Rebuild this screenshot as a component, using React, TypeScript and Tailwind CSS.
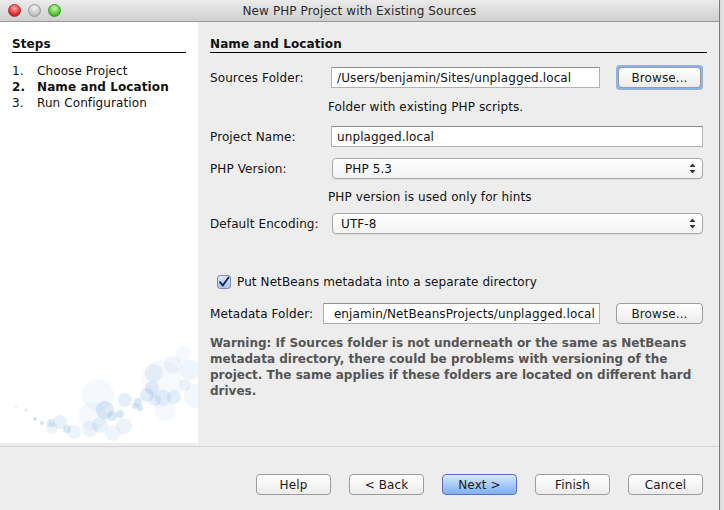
import React from "react";

const bubbles: [number, number, number, number][] = [
  [16, 67, 1, 0.25], [26, 70, 1.5, 0.3], [35, 79, 2, 0.35], [42, 83, 2, 0.35],
  [51, 83, 4, 0.28], [60, 82, 7, 0.18], [52, 88, 6, 0.12], [67, 89, 4, 0.28],
  [74, 92, 7, 0.15], [90, 89, 8, 0.15], [100, 85, 8, 0.15], [93, 76, 14, 0.08],
  [98, 55, 16, 0.08], [105, 70, 9, 0.25], [113, 93, 8, 0.12], [124, 86, 8, 0.15],
  [112, 76, 5, 0.28], [120, 74, 4, 0.3], [125, 60, 7, 0.2], [138, 62, 4, 0.3],
  [135, 66, 3, 0.3], [140, 68, 3, 0.3], [147, 55, 7, 0.22], [152, 48, 7, 0.22],
  [155, 60, 6, 0.2], [165, 70, 11, 0.08], [163, 58, 8, 0.18], [174, 57, 7, 0.2],
  [162, 40, 20, 0.07], [154, 33, 9, 0.16], [173, 25, 9, 0.12], [190, 30, 10, 0.14],
  [196, 56, 12, 0.1], [185, 45, 6, 0.16], [183, 14, 8, 0.08],
];

function Bubbles() {
  return (
    <svg className="absolute bottom-0 left-0" width="198" height="103" viewBox="0 0 198 103">
      {bubbles.map(([x, y, r, o], i) => (
        <circle key={i} cx={x} cy={y} r={r} fill="#7eaee0" fillOpacity={o} />
      ))}
    </svg>
  );
}

function Button({ label, primary, focused, className = "" }: { label: string; primary?: boolean; focused?: boolean; className?: string }) {
  const base = primary
    ? "bg-gradient-to-b from-[#d9e8fc] via-[#a9cbf7] to-[#7fb0f2] border-[#5e6fc2]"
    : "bg-gradient-to-b from-white to-[#ececec] border-[#9d9d9d]";
  return (
    <div className={"rounded-[4px] " + (focused ? "p-[2px] -m-[2px] bg-[#8fb2e6]" : "") + " " + className}>
      <div className={"h-[21px] w-full rounded-[4px] border flex items-center justify-center text-[#1a1a1a] " + base}>
        {label}
      </div>
    </div>
  );
}

function Arrows() {
  return (
    <svg width="7" height="11" viewBox="0 0 7 11" className="mr-[6px]">
      <path d="M3.5 0.5 L6.5 4 L0.5 4 Z" fill="#333" />
      <path d="M3.5 10.5 L6.5 7 L0.5 7 Z" fill="#333" />
    </svg>
  );
}

function Select({ value, pl }: { value: string; pl: string }) {
  return (
    <div className={"ml-[1px] flex-1 h-[21px] rounded-[4px] border border-[#a7a7a7] bg-gradient-to-b from-white to-[#f3f3f3] flex items-center justify-between shadow-[0_1px_0_rgba(0,0,0,0.05)] " + pl}>
      <span>{value}</span>
      <Arrows />
    </div>
  );
}

function Input({ value, className = "" }: { value: string; className?: string }) {
  return (
    <div className={"h-[21px] bg-white border border-[#b2b2b2] border-t-[#8e8e8e] flex items-center pl-[5px] overflow-hidden whitespace-nowrap " + className}>
      {value}
    </div>
  );
}

export default function App() {
  return (
    <div className="w-[724px] h-[510px] flex overflow-hidden text-[12px] tracking-[0.1px] text-[#111] font-['DejaVu_Sans',Verdana,sans-serif] bg-[#ededed]">
      <div className="w-[720px] flex flex-col border-r border-[#7a7a7a]">
        <div className="h-[22px] flex items-center relative bg-gradient-to-b from-[#ebebeb] to-[#cfcfcf] border-b border-[#9a9a9a]">
          <div className="flex items-center gap-[7px] pl-[8px]">
            <span className="w-[13px] h-[13px] rounded-full bg-[radial-gradient(circle_at_50%_30%,#ffb0b0,#e0303a_60%,#a0101a)] border border-[#b03030]" />
            <span className="w-[13px] h-[13px] rounded-full bg-[radial-gradient(circle_at_50%_30%,#f4f4f4,#c8c8c8_60%,#a0a0a0)] border border-[#999]" />
            <span className="w-[13px] h-[13px] rounded-full bg-[radial-gradient(circle_at_50%_30%,#c8f5a8,#5cc838_60%,#2a8a14)] border border-[#3a9a2a]" />
          </div>
          <div className="absolute inset-0 flex items-center justify-center text-[#2b2b2b]">New PHP Project with Existing Sources</div>
        </div>

        <div className="flex h-[421px]">
          <div className="w-[198px] bg-white relative pl-[12px] pr-[12px] pt-[14px]">
            <div className="font-bold leading-[16px] h-[17px] border-b border-black">Steps</div>
            <div className="mt-[10px] leading-[16px]">
              <div className="flex"><span className="w-[25px]">1.</span>Choose Project</div>
              <div className="flex font-bold"><span className="w-[25px]">2.</span>Name and Location</div>
              <div className="flex"><span className="w-[25px]">3.</span>Run Configuration</div>
            </div>
            <Bubbles />
          </div>

          <div className="flex-1 pl-[12px] pr-[12px] pt-[14px]">
            <div className="font-bold leading-[16px] h-[17px] border-b border-black">Name and Location</div>

            <div className="pr-[4px]">
              <div className="flex items-center mt-[14px]">
                <span className="w-[121px]">Sources Folder:</span>
                <Input value="/Users/benjamin/Sites/unplagged.local" className="w-[269px]" />
                <Button label="Browse..." focused className="ml-[16px] w-[87px]" />
              </div>

              <div className="mt-[11px] leading-[16px] pl-[118px]">Folder with existing PHP scripts.</div>

              <div className="flex items-center mt-[11px]">
                <span className="w-[121px]">Project Name:</span>
                <Input value="unplagged.local" className="flex-1" />
              </div>

              <div className="flex items-center mt-[11px]">
                <span className="w-[121px]">PHP Version:</span>
                <Select value="PHP 5.3" pl="pl-[12px]" />
              </div>

              <div className="mt-[10px] leading-[16px] pl-[118px]">PHP version is used only for hints</div>

              <div className="flex items-center mt-[8px]">
                <span className="w-[121px]">Default Encoding:</span>
                <Select value="UTF-8" pl="pl-[8px]" />
              </div>

              <div className="flex items-center mt-[40px] h-[16px] pl-[7px]">
                <span className="w-[14px] h-[14px] rounded-[3px] border border-[#7f8db0] bg-gradient-to-b from-[#dbe8f8] to-[#a9c4ea] flex items-center justify-center">
                  <svg width="12" height="12" viewBox="0 0 12 12">
                    <path d="M2 6.2 L4.8 9.5 L10.5 1.5" fill="none" stroke="#1d2a5a" strokeWidth="2" strokeLinecap="round" strokeLinejoin="round" />
                  </svg>
                </span>
                <span className="ml-[6px]">Put NetBeans metadata into a separate directory</span>
              </div>

              <div className="flex items-center mt-[13px]">
                <span className="w-[113px]">Metadata Folder:</span>
                <div className="w-[277px] h-[21px] bg-white border border-[#b2b2b2] border-t-[#8e8e8e] flex items-center justify-end pr-[4px] overflow-hidden whitespace-nowrap">
                  enjamin/NetBeansProjects/unplagged.local
                </div>
                <Button label="Browse..." className="ml-[16px] w-[87px]" />
              </div>

              <div className="mt-[11px] leading-[16px] font-bold text-[#555] tracking-normal">
                Warning: If Sources folder is not underneath or the same as NetBeans metadata directory, there could be problems with versioning of the project. The same applies if these folders are located on different hard drives.
              </div>
            </div>
          </div>
        </div>

        <div className="flex-1 pt-[3px]">
          <div className="border-t border-[#d4d4d4]" />
          <div className="flex justify-end gap-[18px] pr-[16px] mt-[27px]">
            <Button label="Help" className="w-[75px]" />
            <Button label="< Back" className="w-[75px]" />
            <Button label="Next >" primary className="w-[75px]" />
            <Button label="Finish" className="w-[75px]" />
            <Button label="Cancel" className="w-[75px]" />
          </div>
        </div>
      </div>
      <div className="w-[3px] bg-[#dcdcdc]" />
    </div>
  );
}
